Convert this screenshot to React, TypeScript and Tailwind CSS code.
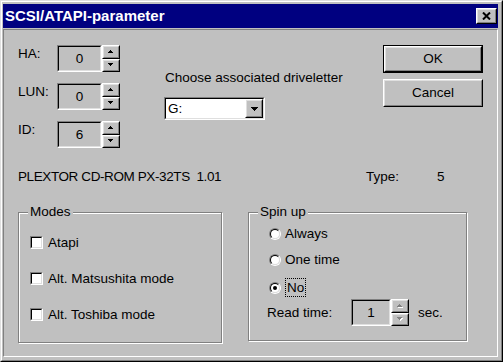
const raisedOuter =
  "border border-t-white border-l-white border-r-black border-b-black";
const raisedInner =
  "border border-t-[#dfdfdf] border-l-[#dfdfdf] border-r-[#808080] border-b-[#808080]";
const sunkenOuter =
  "border border-t-[#808080] border-l-[#808080] border-r-white border-b-white";
const sunkenInner =
  "border border-t-black border-l-black border-r-[#dfdfdf] border-b-[#dfdfdf]";

// little pixel arrows for the spin buttons
const SmallArrow = ({ up, disabled }: { up?: boolean; disabled?: boolean }) => {
  const rows = up ? [[2, 1], [1, 3], [0, 5]] : [[0, 5], [1, 3], [2, 1]];
  return (
    <svg width="6" height="4" viewBox="0 0 6 4" className="block">
      {disabled &&
        rows.map(([x, w], i) => (
          <rect key={"s" + i} x={x + 1} y={i + 1} width={w} height={1} fill="#fff" />
        ))}
      {rows.map(([x, w], i) => (
        <rect key={i} x={x} y={i} width={w} height={1} fill={disabled ? "#808080" : "#000"} />
      ))}
    </svg>
  );
};

const SpinButton = ({ up, disabled }: { up?: boolean; disabled?: boolean }) => (
  <div className={`${raisedOuter} flex-1 bg-[#c0c0c0]`}>
    <div className={`${raisedInner} h-full flex items-center justify-center`}>
      <SmallArrow up={up} disabled={disabled} />
    </div>
  </div>
);

const Spinner = ({
  value,
  width,
  disabled,
}: {
  value: string;
  width: string;
  disabled?: boolean;
}) => (
  <div className="flex h-full">
    <div className={`${sunkenOuter} ${width} h-full`}>
      <div className={`${sunkenInner} h-full flex items-center justify-center bg-[#c0c0c0]`}>
        {value}
      </div>
    </div>
    <div className="flex flex-col w-[18px] h-full">
      <SpinButton up disabled={disabled} />
      <SpinButton disabled={disabled} />
    </div>
  </div>
);

const Checkbox = ({ label }: { label: string }) => (
  <div className="flex items-center h-[13px]">
    <div className={`${sunkenOuter} w-[13px] h-[13px]`}>
      <div className={`${sunkenInner} w-full h-full bg-white`} />
    </div>
    <span className="ml-[5px]">{label}</span>
  </div>
);

const Radio = ({ checked }: { checked?: boolean }) => (
  <div className="w-[12px] h-[12px] rounded-full border border-t-[#808080] border-l-[#808080] border-r-white border-b-white">
    <div className="w-full h-full rounded-full border border-t-black border-l-black border-r-[#dfdfdf] border-b-[#dfdfdf] bg-white flex items-center justify-center">
      {checked && <div className="w-[4px] h-[4px] rounded-full bg-black" />}
    </div>
  </div>
);

const GroupBox = ({
  title,
  className,
  children,
}: {
  title: string;
  className: string;
  children: React.ReactNode;
}) => (
  <div
    className={`relative border border-[#808080] shadow-[inset_1px_1px_0_#fff,1px_1px_0_#fff] ${className}`}
  >
    <span className="absolute top-[-9px] left-[9px] px-[2px] bg-[#c0c0c0]">
      {title}
    </span>
    {children}
  </div>
);

const Button = ({ label, isDefault }: { label: string; isDefault?: boolean }) => (
  <div className={`w-[100px] h-[28px] ${isDefault ? "border border-black" : ""}`}>
    <div className={`${raisedOuter} h-full`}>
      <div className={`${raisedInner} h-full flex items-center justify-center`}>
        {label}
      </div>
    </div>
  </div>
);

const App = () => {
  return (
    <div className="w-[503px] h-[362px] bg-[#c0c0c0] font-['Liberation_Sans',Arial,sans-serif] text-[13.5px] leading-4 text-black">
      <div className="w-full h-full border border-t-[#dfdfdf] border-l-[#dfdfdf] border-r-black border-b-black">
        <div className="w-full h-full border border-t-white border-l-white border-r-[#808080] border-b-[#808080] pt-[2px] pl-[1px] pr-[3px] pb-[3px] flex flex-col">
          {/* title bar */}
          <div className="h-[24px] bg-[#000080] flex items-center pl-[2px] pr-[1px]">
            <span className="text-white font-bold text-[15px]">
              SCSI/ATAPI-parameter
            </span>
            <div className={`${raisedOuter} ml-auto w-[21px] h-[16px] bg-[#c0c0c0]`}>
              <div className={`${raisedInner} h-full flex items-center justify-center`}>
                <svg width="9" height="8" viewBox="0 0 9 8">
                  <path d="M1 0.5 L8 7.5 M8 0.5 L1 7.5" stroke="#000" strokeWidth="2" />
                </svg>
              </div>
            </div>
          </div>

          {/* client area */}
          <div className="mt-[1px] flex-1 border border-t-[#808080] border-l-[#808080] border-r-white border-b-white pt-[15px] pl-[14px] pr-[14px]">
            <div className="flex items-start">
              <div className="flex flex-col gap-[11px]">
                {[
                  ["HA:", "0"],
                  ["LUN:", "0"],
                  ["ID:", "6"],
                ].map(([label, value]) => (
                  <div key={label} className="flex h-[27px]">
                    <span className="w-[39px] pt-[1px]">{label}</span>
                    <Spinner value={value} width="w-[45px]" />
                  </div>
                ))}
              </div>

              <div className="ml-[44px] mt-[25px] flex flex-col">
                <span className="pl-[1px]">Choose associated driveletter</span>
                <div className={`${sunkenOuter} mt-[11px] w-[101px] h-[23px]`}>
                  <div className={`${sunkenInner} h-full flex bg-white`}>
                    <span className="flex-1 flex items-center pl-[2px]">G:</span>
                    <div className={`${raisedOuter} w-[18px] h-full bg-[#c0c0c0]`}>
                      <div className={`${raisedInner} h-full flex items-center justify-center`}>
                        <svg width="7" height="4" viewBox="0 0 7 4">
                          <rect x="0" y="0" width="7" height="1" />
                          <rect x="1" y="1" width="5" height="1" />
                          <rect x="2" y="2" width="3" height="1" />
                          <rect x="3" y="3" width="1" height="1" />
                        </svg>
                      </div>
                    </div>
                  </div>
                </div>
              </div>

              <div className="ml-auto flex flex-col gap-[6px]">
                <Button label="OK" isDefault />
                <Button label="Cancel" />
              </div>
            </div>

            <div className="mt-[21px] flex">
              <span className="w-[348px] whitespace-pre tracking-[-0.4px]">
                PLEXTOR CD-ROM PX-32TS  1.01
              </span>
              <span className="w-[71px]">Type:</span>
              <span>5</span>
            </div>

            <div className="mt-[27px] flex items-start">
              <GroupBox title="Modes" className="w-[204px] h-[131px]">
                <div className="pt-[23px] pl-[11px] flex flex-col gap-[23px]">
                  <Checkbox label="Atapi" />
                  <Checkbox label="Alt. Matsushita mode" />
                  <Checkbox label="Alt. Toshiba mode" />
                </div>
              </GroupBox>

              <GroupBox title="Spin up" className="ml-[26px] w-[219px] h-[129px]">
                <div className="pt-[15px] pl-[20px] flex flex-col">
                  <div className="flex items-center h-[12px]">
                    <Radio />
                    <span className="ml-[4px]">Always</span>
                  </div>
                  <div className="flex items-center h-[12px] mt-[14px]">
                    <Radio />
                    <span className="ml-[4px]">One time</span>
                  </div>
                  <div className="flex items-center h-[19px] mt-[12px]">
                    <Radio checked />
                    <span className="ml-[4px] h-[19px] px-[1px] border border-dotted border-black leading-[17px]">
                      No
                    </span>
                  </div>
                </div>
                <div className="mt-[2px] pl-[18px] flex items-center h-[27px]">
                  <span className="w-[84px]">Read time:</span>
                  <Spinner value="1" width="w-[40px]" disabled />
                  <span className="ml-[9px]">sec.</span>
                </div>
              </GroupBox>
            </div>
          </div>
        </div>
      </div>
    </div>
  );
};

export default App;
